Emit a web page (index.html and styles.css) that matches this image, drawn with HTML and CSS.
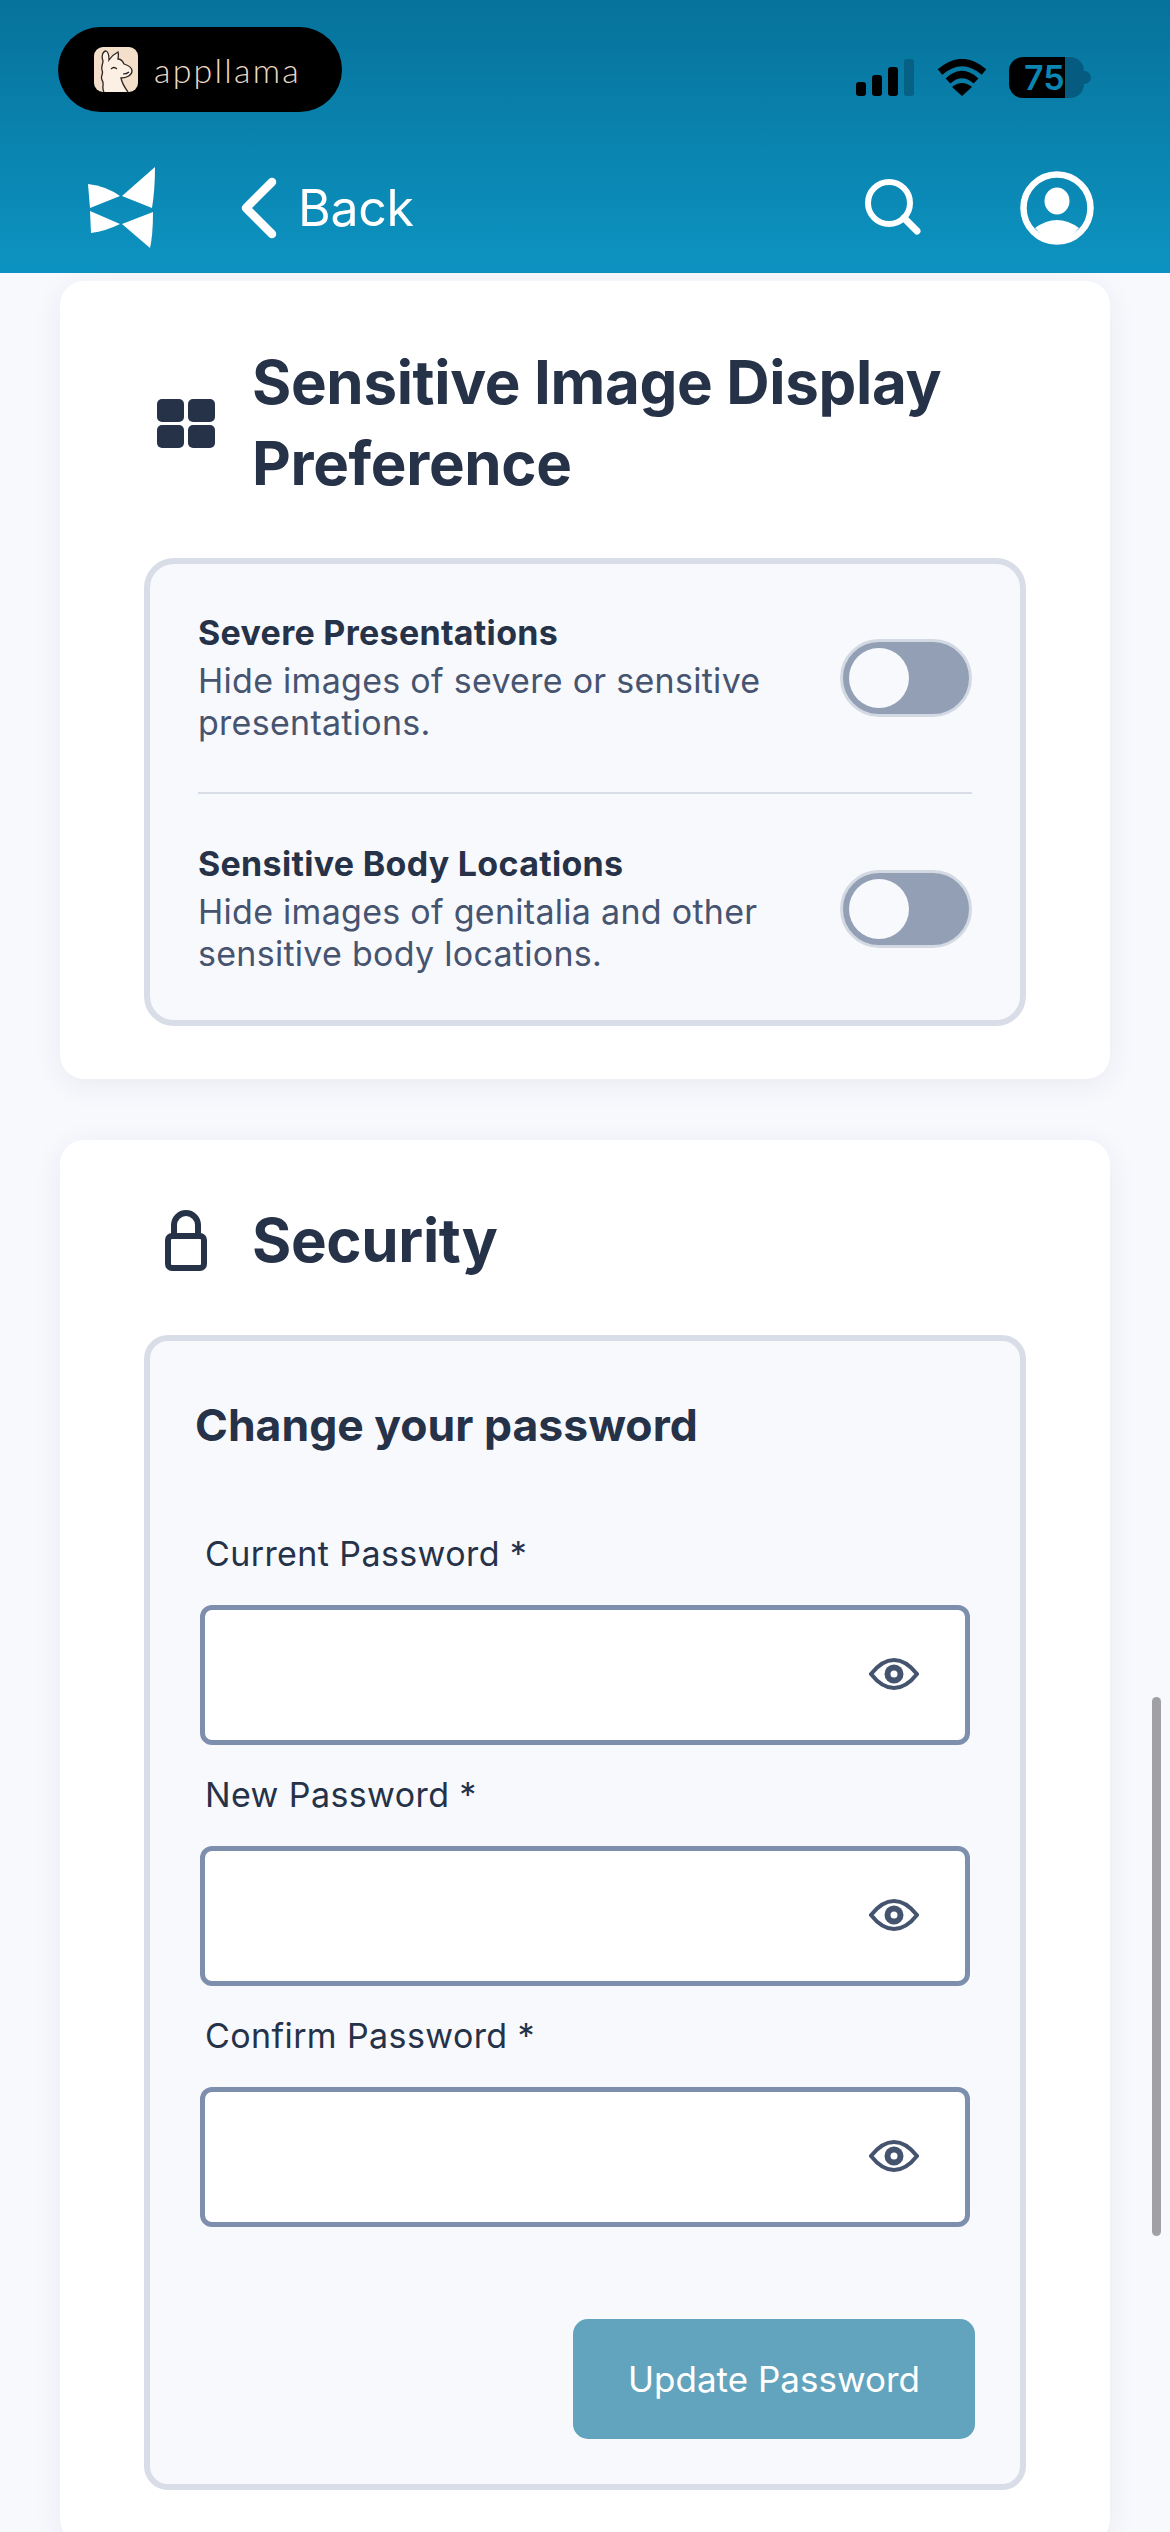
FILE: index.html
```html
<!DOCTYPE html>
<html lang="en">
<head>
    <meta charset="UTF-8">
    <meta name="viewport" content="width=device-width, initial-scale=1.0">
    <title>Settings</title>
    <link rel="stylesheet" href="styles.css">
</head>
<body>
    <header class="header">
        <div class="status-row">
            <div class="app-pill">
                <svg class="llama" viewBox="0 0 44 45">
                    <rect width="44" height="45" rx="9" fill="#f4e0ca"/>
                    <path d="M10 45C7 40 11 37 8 33 6 29 10 27 8 23 7 19 9 17 9 14 7 9 9 4 12 4 15 5 15 10 15 13 17 10 20 7 24 5 25 8 24 10 24 12 28 12 29 15 30 17 33 18 38 20 38 24 38 28 33 31 27 31 28 36 31 41 34 45" fill="#fbf0e3" stroke="#2b2421" stroke-width="1.3"/>
                    <path d="M17 22Q20 19 23 22M29 27Q33 27 35 25" fill="none" stroke="#2b2421" stroke-width="1.2"/>
                </svg>
                <span class="app-name">appllama</span>
            </div>
            <div class="status-icons">
                <svg class="signal" viewBox="0 0 58 37">
                    <rect x="0" y="23" width="10" height="14" rx="3"/>
                    <rect x="16" y="16" width="10" height="21" rx="3"/>
                    <rect x="32" y="8" width="10" height="29" rx="3"/>
                    <rect x="48" y="0" width="10" height="37" rx="3" fill="#066184"/>
                </svg>
                <svg class="wifi" viewBox="0 0 50 37">
                    <path d="M3 13Q25-6 47 13" fill="none" stroke="#000" stroke-width="7"/>
                    <path d="M11 22Q25 9 39 22" fill="none" stroke="#000" stroke-width="7"/>
                    <path d="M25 37 15 28Q25 20 35 28Z"/>
                </svg>
                <div class="battery"><span>75</span></div>
            </div>
        </div>
        <nav class="nav-row">
            <svg class="logo" viewBox="0 0 68 82">
                <path d="M0 17Q18 19 32 29L2 41Z"/>
                <path d="M2 44 32 57Q18 64 3 66Z"/>
                <path d="M67 0 34 29 64 41Q67 23 67 0Z"/>
                <path d="M65 45 34 57 62 81Q65 68 65 45Z"/>
            </svg>
            <svg class="chevron" viewBox="0 0 36 62">
                <path d="M31 5 5 31 31 57" fill="none" stroke="#fff" stroke-width="8.500" stroke-linecap="round" stroke-linejoin="round"/>
            </svg>
            <span class="back">Back</span>
            <svg class="search" viewBox="0 0 58 58">
                <circle cx="24" cy="24" r="21" fill="none" stroke="#fff" stroke-width="6"/>
                <path d="M39 39 52 52" stroke="#fff" stroke-width="7" stroke-linecap="round"/>
            </svg>
            <svg class="profile" viewBox="0 0 74 74">
                <circle cx="37" cy="37" r="33.500" fill="none" stroke="#fff" stroke-width="6.500"/>
                <ellipse cx="37" cy="30" rx="12.500" ry="13.500" fill="#fff"/>
                <path d="M15 57Q37 41 59 57 48 71 37 71 26 71 15 57Z" fill="#fff"/>
            </svg>
        </nav>
    </header>

    <main class="content">
        <section class="card">
            <div class="card-head">
                <svg class="icon-grid" viewBox="0 0 58 49">
                    <rect x="0" y="0" width="27" height="23" rx="5"/>
                    <rect x="31" y="0" width="27" height="23" rx="5"/>
                    <rect x="0" y="26" width="27" height="23" rx="5"/>
                    <rect x="31" y="26" width="27" height="23" rx="5"/>
                </svg>
                <h2>Sensitive Image Display Preference</h2>
            </div>
            <div class="box box-prefs">
                <div class="pref pref-first">
                    <div class="pref-text">
                        <h3>Severe Presentations</h3>
                        <p>Hide images of severe or sensitive presentations.</p>
                    </div>
                    <div class="toggle"><span class="knob"></span></div>
                </div>
                <div class="pref">
                    <div class="pref-text">
                        <h3>Sensitive Body Locations</h3>
                        <p>Hide images of genitalia and other sensitive body locations.</p>
                    </div>
                    <div class="toggle"><span class="knob"></span></div>
                </div>
            </div>
        </section>

        <section class="card card-security">
            <div class="card-head">
                <svg class="icon-lock" viewBox="0 0 42 61">
                    <path d="M9 27V15a12 12 0 0 1 24 0V27" fill="none" stroke="#263248" stroke-width="6"/>
                    <rect x="3" y="26" width="36" height="32" rx="4" fill="none" stroke="#263248" stroke-width="6"/>
                </svg>
                <h2>Security</h2>
            </div>
            <form class="box box-password">
                <h3 class="form-title">Change your password</h3>
                <label class="field-label" for="current">Current Password *</label>
                <div class="field">
                    <input type="password" id="current">
                    <svg class="eye" viewBox="0 0 50 32">
                        <path d="M2 16Q13 2 25 2T48 16Q37 30 25 30T2 16Z" fill="none" stroke="#44546f" stroke-width="4"/>
                        <circle cx="25" cy="16" r="9.500" fill="#44546f"/>
                        <circle cx="25" cy="16" r="3.500" fill="#fff"/>
                    </svg>
                </div>
                <label class="field-label" for="new">New Password *</label>
                <div class="field">
                    <input type="password" id="new">
                    <svg class="eye" viewBox="0 0 50 32">
                        <path d="M2 16Q13 2 25 2T48 16Q37 30 25 30T2 16Z" fill="none" stroke="#44546f" stroke-width="4"/>
                        <circle cx="25" cy="16" r="9.500" fill="#44546f"/>
                        <circle cx="25" cy="16" r="3.500" fill="#fff"/>
                    </svg>
                </div>
                <label class="field-label" for="confirm">Confirm Password *</label>
                <div class="field">
                    <input type="password" id="confirm">
                    <svg class="eye" viewBox="0 0 50 32">
                        <path d="M2 16Q13 2 25 2T48 16Q37 30 25 30T2 16Z" fill="none" stroke="#44546f" stroke-width="4"/>
                        <circle cx="25" cy="16" r="9.500" fill="#44546f"/>
                        <circle cx="25" cy="16" r="3.500" fill="#fff"/>
                    </svg>
                </div>
                <div class="form-actions">
                    <button type="button" class="update-btn">Update Password</button>
                </div>
            </form>
        </section>
    </main>

    <div class="scrollbar"></div>
</body>
</html>
```

FILE: styles.css
```css
* {
    box-sizing: border-box;
}

html, body {
    margin: 0;
    padding: 0;
}

body {
    width: 1170px;
    height: 2532px;
    overflow: hidden;
    background-color: #f8f9fd;
    font-family: Inter, "Liberation Sans", sans-serif;
    color: #263248;
}

/* header */
.header {
    height: 273px;
    padding-top: 27px;
    background: linear-gradient(180deg, #06729b 0%, #0d93c1 100%);
}

.status-row {
    display: flex;
    justify-content: space-between;
    align-items: flex-start;
    height: 85px;
    padding: 0 86px 0 58px;
}

.app-pill {
    display: flex;
    align-items: center;
    width: 284px;
    height: 85px;
    padding-left: 36px;
    background-color: #000;
    border-radius: 43px;
}

.llama {
    width: 44px;
    height: 45px;
    margin-right: 16px;
}

.app-name {
    font-family: Lato, sans-serif;
    font-weight: 300;
    font-size: 34px;
    letter-spacing: 2.2px;
    color: #ecd9c5;
}

.status-icons {
    display: flex;
    align-items: flex-start;
    padding-top: 30px;
}

.signal {
    width: 58px;
    height: 37px;
    margin: 2px 23px 0 0;
}

.wifi {
    width: 50px;
    height: 37px;
    margin: 2px 22px 0 0;
}

.battery {
    position: relative;
    width: 75px;
    height: 41px;
    padding-left: 15px;
    border-radius: 14px;
    background: linear-gradient(90deg, #000 0, #000 56px, #055c80 56px);
    font-size: 34px;
    font-weight: 600;
    line-height: 41px;
    color: #0b86b3;
}

.battery::after {
    content: "";
    position: absolute;
    top: 14px;
    right: -7px;
    width: 7px;
    height: 13px;
    border-radius: 0 7px 7px 0;
    background-color: #055c80;
}

.nav-row {
    display: flex;
    align-items: center;
    height: 81px;
    margin-top: 55px;
    padding-left: 88px;
}

.logo {
    width: 68px;
    height: 82px;
    fill: #fff;
    margin-right: 85px;
}

.chevron {
    width: 36px;
    height: 62px;
    margin-right: 21px;
}

.back {
    width: 567px;
    font-size: 50px;
    font-weight: 400;
    letter-spacing: -0.3px;
    color: #fff;
}

.search {
    width: 58px;
    height: 58px;
    margin-right: 97px;
}

.profile {
    width: 74px;
    height: 74px;
}

/* cards */
.content {
    padding: 8px 60px 0;
}

.card {
    padding: 61px 84px 53px;
    background-color: #fff;
    border-radius: 24px;
    box-shadow: 0 6px 30px rgba(30, 45, 80, 0.07);
}

.card-security {
    margin-top: 61px;
    padding-top: 60px;
}

.card-head {
    display: flex;
    align-items: center;
    padding-left: 13px;
    margin-bottom: 54px;
}

.card-head h2 {
    flex: 1;
    margin: 0;
    font-size: 60px;
    font-weight: 700;
    line-height: 81px;
    letter-spacing: -0.33px;
}

.icon-grid {
    width: 58px;
    height: 49px;
    margin-right: 37px;
    fill: #263248;
    flex: none;
}

.icon-lock {
    width: 42px;
    height: 61px;
    margin: 0 45px 0 8px;
    flex: none;
}

.box {
    background-color: #f8f9fd;
    border: 6px solid #d8dde7;
    border-radius: 30px;
}

.box-prefs {
    padding: 45px 48px;
}

/* preference rows */
.pref {
    display: flex;
    justify-content: space-between;
    align-items: center;
}

.pref-first {
    padding-bottom: 48px;
    margin-bottom: 46px;
    border-bottom: 2px solid #d8dde7;
}

.pref-text {
    width: 590px;
}

.pref-text h3 {
    margin: 0 0 3px;
    font-size: 34px;
    font-weight: 700;
    line-height: 48px;
    letter-spacing: 0.3px;
}

.pref-text p {
    margin: 0;
    font-size: 34px;
    line-height: 42px;
    letter-spacing: 0.28px;
    color: #465470;
}

.toggle {
    display: flex;
    align-items: center;
    width: 132px;
    height: 78px;
    margin-top: 3px;
    padding-left: 6px;
    background-color: #929fb5;
    border: 3px solid #d3d9e2;
    border-radius: 39px;
}

.knob {
    width: 60px;
    height: 60px;
    border-radius: 50%;
    background-color: #f8f9fd;
}

/* password form */
.box-password {
    padding: 54px 45px 45px;
    border-radius: 24px;
}

.form-title {
    margin: 0 0 77px;
    font-size: 44.5px;
    font-weight: 700;
    line-height: 60px;
}

.field-label {
    display: block;
    margin: 0 0 29px 10px;
    font-size: 34px;
    line-height: 44px;
    letter-spacing: 0.4px;
}

.field {
    position: relative;
    margin: 0 5px 28px;
}

.field input {
    display: block;
    width: 100%;
    height: 140px;
    padding: 0 30px;
    background-color: #fff;
    border: 5px solid #7d8fad;
    border-radius: 12px;
    outline: none;
}

.eye {
    position: absolute;
    top: 53px;
    right: 51px;
    width: 50px;
    height: 32px;
}

.form-actions {
    display: flex;
    justify-content: flex-end;
    margin-top: 92px;
}

.update-btn {
    width: 402px;
    height: 120px;
    background-color: #62a4bd;
    border: none;
    border-radius: 15px;
    font-family: Inter, "Liberation Sans", sans-serif;
    font-size: 35px;
    color: #fff;
}

.scrollbar {
    position: absolute;
    top: 1697px;
    left: 1152px;
    width: 9px;
    height: 539px;
    border-radius: 5px;
    background-color: #a1a1a3;
}
```
